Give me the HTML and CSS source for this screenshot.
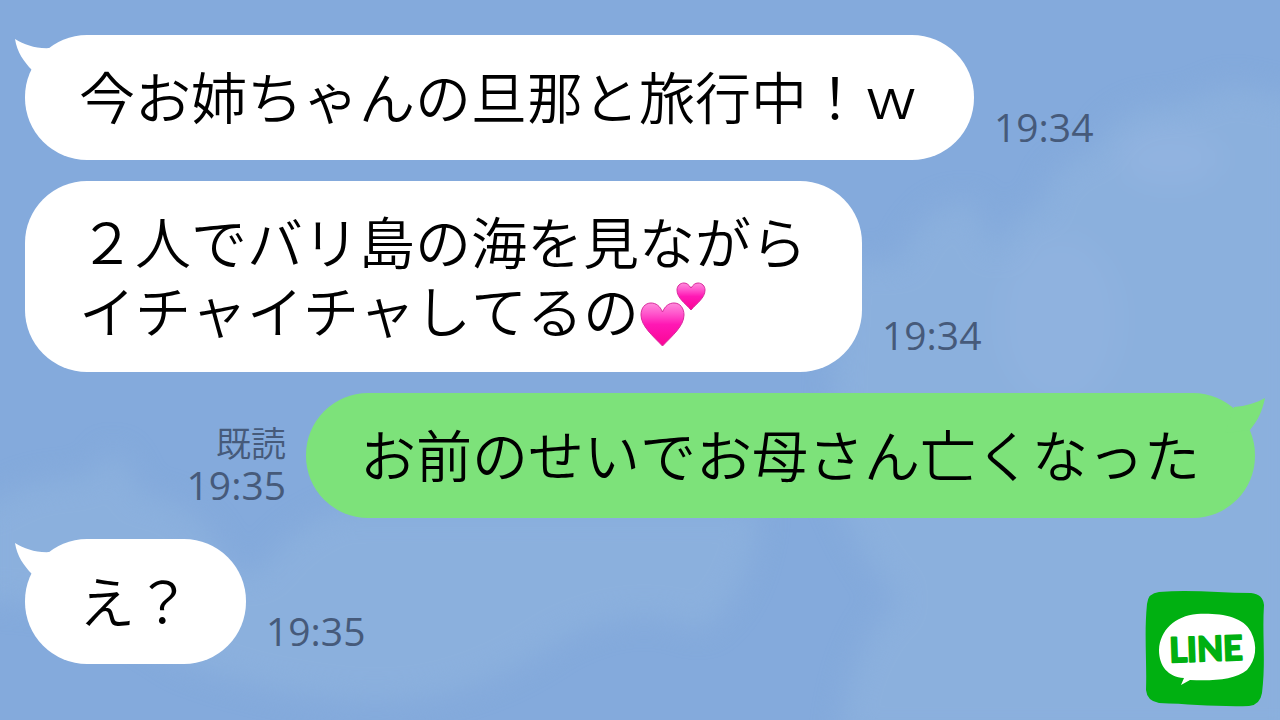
FILE: index.html
```html
<!DOCTYPE html>
<html lang="ja">
<head>
<meta charset="UTF-8">
<meta name="viewport" content="width=device-width, initial-scale=1.0">
<title>LINE トーク</title>
<link rel="stylesheet" href="styles.css">
</head>
<body>

<svg class="sky" viewBox="0 0 1280 720" preserveAspectRatio="none" aria-hidden="true">
    <g class="clouds">
        <path fill="#8bb0dd" d="M840 262L900 262Q925 198 975 202Q990 250 1000 250Q1015 205 1042 210Q1045 165 1095 150Q1120 100 1180 105L1230 85L1300 100V740H840Q850 640 900 600Q860 560 830 480Z"/>
        <path fill="#8bb0dd" d="M-20 510Q30 480 60 480Q100 480 110 450Q130 460 140 495Q200 500 225 560Q245 590 270 560Q290 530 340 510H760Q750 600 700 630Q640 600 560 640Q460 710 350 700Q250 690 180 660Q100 600 -20 600Z"/>
        <ellipse fill="#91b3e0" cx="1170" cy="158" rx="50" ry="28"/>
        <ellipse fill="#8fb2df" cx="1060" cy="320" rx="60" ry="85"/>
    </g>
</svg>

<main class="chat">
    <div class="message">
        <div class="bubble">
            <svg class="tail" viewBox="0 0 40 36" aria-hidden="true"><path d="M0 0C10 6 21 10 36 9L40 36L17 31C9 23 2 13 0 0Z"/></svg>
            <p>今お姉ちゃんの旦那と旅行中！ｗ</p>
        </div>
        <div class="meta"><time>19:34</time></div>
    </div>

    <div class="message">
        <div class="bubble bubble-long">
            <p>２人でバリ島の海を見ながら<br>イチャイチャしてるの<svg class="hearts" viewBox="0 0 68 68" role="img" aria-label="ハート">
                <defs>
                    <linearGradient id="pink" x1="0" y1="0" x2="0" y2="1">
                        <stop offset="0" stop-color="#ff8cdc"/>
                        <stop offset="0.25" stop-color="#ff55cc"/>
                        <stop offset="0.5" stop-color="#ff18b4"/>
                        <stop offset="1" stop-color="#fa0595"/>
                    </linearGradient>
                </defs>
                <g fill="url(#pink)" stroke="#d92b9d" stroke-width="1">
                    <path d="M23.500 31C26 25 30 22 35 22C41 22 45 27 45 34C45 45 33 55 23.500 65C14 55 2 45 2 34C2 27 6 22 12 22C17 22 21 25 23.500 31Z"/>
                    <path d="M52 7C54 4 56 2 59 2C63 2 66 5 66 9C66 17 58 22 52 29C46 22 38 17 38 9C38 5 41 2 45 2C48 2 50 4 52 7Z"/>
                </g>
            </svg></p>
        </div>
        <div class="meta"><time>19:34</time></div>
    </div>

    <div class="message mine">
        <div class="bubble">
            <svg class="tail" viewBox="0 0 40 36" aria-hidden="true"><path d="M40 1C31 6 21 9 9 10L0 36L25 33C33 23 37 15 40 1Z"/></svg>
            <p>お前のせいでお母さん亡くなった</p>
        </div>
        <div class="meta"><span class="read">既読</span><time>19:35</time></div>
    </div>

    <div class="message">
        <div class="bubble">
            <svg class="tail" viewBox="0 0 40 36" aria-hidden="true"><path d="M0 0C10 6 21 10 36 9L40 36L17 31C9 23 2 13 0 0Z"/></svg>
            <p>え？</p>
        </div>
        <div class="meta"><time>19:35</time></div>
    </div>
</main>

<svg class="logo" viewBox="0 0 120 118" role="img" aria-label="LINE">
    <path fill="#00b011" d="M14 2C45 -1 75 3 106 3Q118 4 119 15C117 45 121 70 117 103Q115 115 104 116C72 117 45 114 14 113Q2 111 1 100C2 70 -1 45 2 14Q3 3 14 2Z"/>
    <path fill="#fff" d="M52 24C75 23 98 26 106 42C113 56 111 70 102 80C90 90 68 91 45 90L36 95L39 88C23 87 14 76 14 60C15 40 30 26 52 24Z"/>
    <text class="logo-text" x="61" y="71" transform="rotate(-2 61 60)">LINE</text>
</svg>

</body>
</html>
```
FILE: styles.css
```css
* {
    box-sizing: border-box;
}
body {
    margin: 0;
    min-height: 100vh;
    position: relative;
    overflow-x: hidden;
    font-family: "Noto Sans CJK JP", sans-serif;
    color: #000;
    background-color: #84aadc;
}
/* soft clouds behind the chat */
.sky {
    position: absolute;
    inset: 0;
    width: 100%;
    height: 100%;
}
.clouds {
    filter: blur(14px);
}
.chat {
    position: relative;
    display: flex;
    flex-direction: column;
    gap: 21px;
    padding: 35px 25px;
}
.message {
    display: flex;
    align-items: flex-end;
    gap: 20px;
}
.mine {
    flex-direction: row-reverse;
}
.bubble {
    position: relative;
    padding: 25px 55px 31px 54px;
    border-radius: 62px;
    background-color: #fff;
    font-size: 56px;
    font-weight: 350;
    font-kerning: none;
    line-height: 69px;
}
.bubble-long {
    padding: 24px 55px 29px 54px;
}
.bubble p {
    margin: 0;
    white-space: nowrap;
}
.mine .bubble {
    background-color: #7de27a;
}
.tail {
    position: absolute;
    top: 4px;
    left: -10px;
    width: 40px;
    height: 36px;
    fill: #fff;
}
.mine .tail {
    left: auto;
    right: -10px;
    fill: #7de27a;
}
.hearts {
    display: inline-block;
    width: 68px;
    height: 68px;
    vertical-align: -4px;
    margin: -12px 0;
}
.meta {
    display: flex;
    flex-direction: column;
    align-items: flex-end;
    margin-bottom: 12px;
    font-family: "Open Sans", "Noto Sans CJK JP", sans-serif;
    font-size: 39px;
    line-height: 43px;
    color: #465a7a;
}
.bubble-long + .meta {
    margin-bottom: 16px;
}
.read {
    font-family: "Noto Sans CJK JP", sans-serif;
    font-size: 35px;
    font-weight: 350;
}
.logo {
    position: absolute;
    right: 15px;
    bottom: 12px;
    width: 120px;
    height: 118px;
}
.logo-text {
    font-family: Lato, sans-serif;
    font-size: 34px;
    font-weight: bold;
    text-anchor: middle;
    fill: #00b011;
    stroke: #00b011;
    stroke-width: 2;
    stroke-linejoin: round;
}
```
